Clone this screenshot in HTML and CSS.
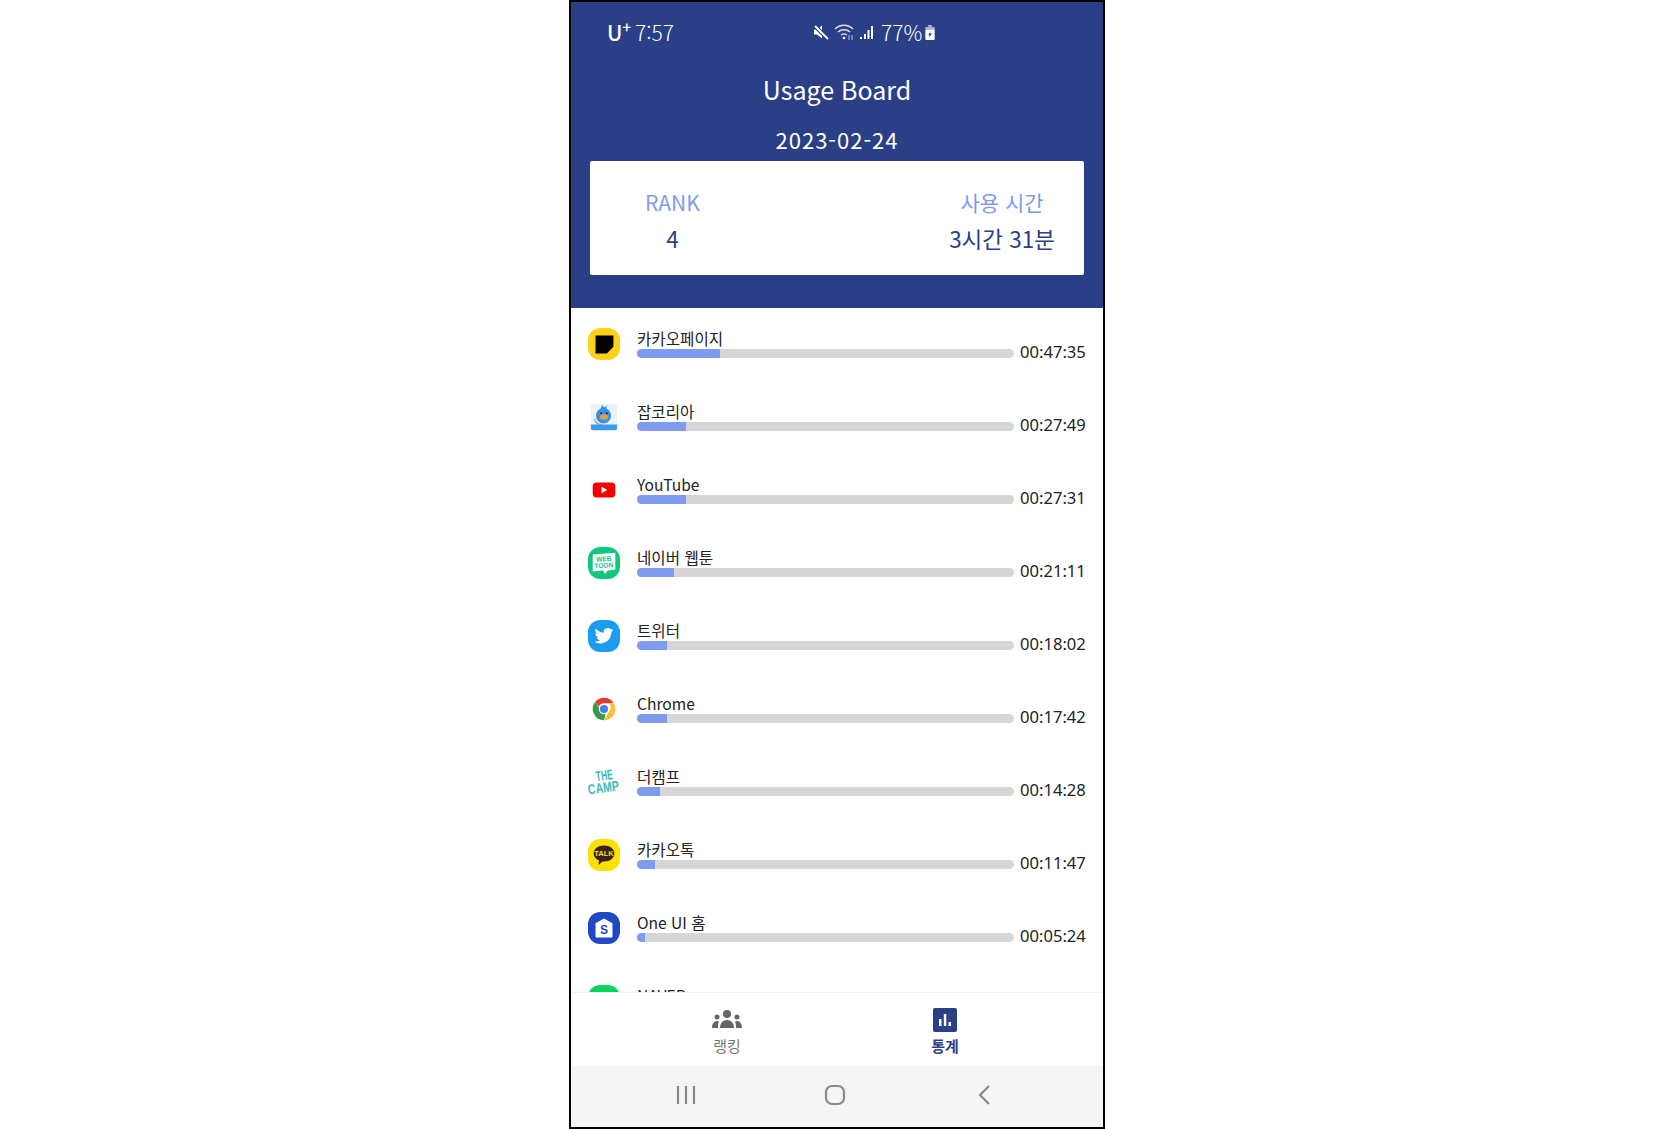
FILE: index.html
```html
<!DOCTYPE html>
<html lang="ko">
<head>
    <meta charset="UTF-8">
    <meta name="viewport" content="width=device-width, initial-scale=1.0">
    <title>Usage Board</title>
    <link rel="stylesheet" href="styles.css">
</head>
<body>

<div class="phone">
    <header class="top">
        <div class="status">
            <span class="carrier">U<sup>+</sup></span>
            <span class="clock">7:57</span>
            <div class="status-right">
                <svg class="ic-mute" viewBox="0 0 18 18"><path d="M2 6.500h3l5-4v13l-5-4H2z" fill="#fff"/><path d="M2 2l14 14" stroke="#2a3f85" stroke-width="4"/><path d="M3 3l13 13" stroke="#fff" stroke-width="1.800"/></svg>
                <svg class="ic-wifi" viewBox="0 0 20 18"><path d="M1 6c5-5 13-5 18 0M4 9c3.500-3 8.500-3 12 0M7 12c2-1.500 4-1.500 6 0" fill="none" stroke="#dfe3f0" stroke-width="1.400"/><circle cx="10" cy="15" r="1.300" fill="#fff"/><path d="M15 12v5M18 12v5" stroke="#b9c0da" stroke-width="1"/></svg>
                <svg class="ic-signal" viewBox="0 0 16 16"><path d="M2 13h2v2H2zM6 10h2v5H6zM9.500 6h2v9h-2zM13 2h2v13h-2z" fill="#fff"/></svg>
                <span class="battery-num">77%</span>
                <svg class="ic-batt" viewBox="0 0 10 16"><rect x="3" y="0" width="4" height="2" fill="#aab2cf"/><rect x="0" y="2" width="10" height="4" fill="#aab2cf"/><rect x="0" y="5" width="10" height="11" rx="1" fill="#fff"/><path d="M6 6L3 11h2l-1 3 3-5H5z" fill="#2a3f85"/></svg>
            </div>
        </div>
        <h1>Usage Board</h1>
        <div class="date">2023-02-24</div>
        <div class="summary">
            <div class="summary-col">
                <div class="summary-label">RANK</div>
                <div class="summary-value">4</div>
            </div>
            <div class="summary-col">
                <div class="summary-label">사용 시간</div>
                <div class="summary-value">3시간 31분</div>
            </div>
        </div>
    </header>

    <main class="list">
        <div class="row">
            <svg class="app-icon" viewBox="0 0 34 34"><rect width="34" height="34" rx="13" fill="#fdd117"/><path d="M8 8h19v12l-7 7H8z" fill="#000"/></svg>
            <div class="app-name">카카오페이지</div>
            <div class="track"><div class="fill" style="width:83px"></div></div>
            <div class="time">00:47:35</div>
        </div>
        <div class="row">
            <svg class="app-icon" viewBox="0 0 34 34"><rect x="3" y="3" width="28" height="28" rx="3" fill="#eaf2fb"/><path d="M3 25h28v4a2 2 0 0 1-2 2H5a2 2 0 0 1-2-2z" fill="#3f9bea"/><path d="M15 4l2 3 3-2-.5 3c3 1.500 5 4 5 7.500 0 5-4 8.500-8 8.500s-8-3.500-8-8.500c0-3.500 2-6 5-7.500z" fill="#3d8fe0"/><path d="M7 19c0 3 3 6 7 6" stroke="#8a9bb0" stroke-width="1.200" fill="none"/><ellipse cx="17" cy="17" rx="4.500" ry="2.800" fill="#d9a441"/><circle cx="14" cy="13" r="1" fill="#123"/><circle cx="20" cy="13" r="1" fill="#123"/></svg>
            <div class="app-name">잡코리아</div>
            <div class="track"><div class="fill" style="width:49px"></div></div>
            <div class="time">00:27:49</div>
        </div>
        <div class="row">
            <svg class="app-icon" viewBox="0 0 34 34"><rect x="5" y="9" width="24" height="16" rx="4" fill="#f40000"/><path d="M14.500 13.500l6 3.500-6 3.500z" fill="#fff"/></svg>
            <div class="app-name">YouTube</div>
            <div class="track"><div class="fill" style="width:49px"></div></div>
            <div class="time">00:27:31</div>
        </div>
        <div class="row">
            <svg class="app-icon" viewBox="0 0 34 34"><rect width="34" height="34" rx="13" fill="#10c77e"/><path d="M5 8l24-2v18l-8 1-3 4-2-4-11 1z" fill="#fff"/><text class="webtoon-text" x="17" y="15" text-anchor="middle" transform="rotate(-4 17 15)">WEB</text><text class="webtoon-text" x="17" y="22" text-anchor="middle" transform="rotate(-4 17 22)">TOON</text></svg>
            <div class="app-name">네이버 웹툰</div>
            <div class="track"><div class="fill" style="width:37px"></div></div>
            <div class="time">00:21:11</div>
        </div>
        <div class="row">
            <svg class="app-icon" viewBox="0 0 34 34"><rect width="34" height="34" rx="13" fill="#1d9bf0"/><path d="M27 10.500c-.8.400-1.600.600-2.400.700.900-.500 1.500-1.300 1.800-2.300-.8.500-1.700.800-2.600 1a4.100 4.100 0 0 0-7 3.700c-3.400-.2-6.400-1.800-8.400-4.300-1.100 1.900-.5 4.300 1.300 5.500-.7 0-1.300-.2-1.900-.5 0 2 1.400 3.700 3.300 4.100-.6.200-1.200.2-1.900.1.500 1.600 2 2.800 3.800 2.800-1.800 1.400-4 2-6.100 1.800 1.800 1.200 4 1.800 6.300 1.800 7.600 0 11.800-6.400 11.600-12.100.8-.6 1.500-1.300 2.200-2.300z" fill="#fff"/></svg>
            <div class="app-name">트위터</div>
            <div class="track"><div class="fill" style="width:30px"></div></div>
            <div class="time">00:18:02</div>
        </div>
        <div class="row">
            <svg class="app-icon" viewBox="0 0 34 34"><path d="M17 5a12 12 0 0 1 10.400 6H17a6 6 0 0 0-5.600 3.800L7.800 9.400A12 12 0 0 1 17 5z" fill="#e33b2e"/><path d="M27.400 11A12 12 0 0 1 17 29l5.200-9a6 6 0 0 0 0-9z" fill="#fbc02d"/><path d="M17 29A12 12 0 0 1 7.800 9.400l5 8.600a6 6 0 0 0 6.400 2.800z" fill="#3a9a4a"/><circle cx="17" cy="17" r="5.500" fill="#fff"/><circle cx="17" cy="17" r="4.300" fill="#3f7fe8"/></svg>
            <div class="app-name">Chrome</div>
            <div class="track"><div class="fill" style="width:30px"></div></div>
            <div class="time">00:17:42</div>
        </div>
        <div class="row">
            <svg class="app-icon camp-icon" viewBox="0 0 34 34"><text class="camp-text" x="18" y="15" text-anchor="middle" textLength="18" lengthAdjust="spacingAndGlyphs" transform="rotate(-8 18 15)">THE</text><text class="camp-text" x="17" y="28" text-anchor="middle" textLength="33" lengthAdjust="spacingAndGlyphs" transform="rotate(-8 17 28)">CAMP</text></svg>
            <div class="app-name">더캠프</div>
            <div class="track"><div class="fill" style="width:23px"></div></div>
            <div class="time">00:14:28</div>
        </div>
        <div class="row">
            <svg class="app-icon" viewBox="0 0 34 34"><rect width="34" height="34" rx="13" fill="#fae100"/><path d="M17 7c6.300 0 11 3.600 11 8.500S23.300 24 17 24h-1.500L11 27.500l.8-4.700C8 21.300 6 18.700 6 15.500 6 10.600 10.700 7 17 7z" fill="#3b1e1e"/><text class="talk-text" x="17" y="18.500" text-anchor="middle">TALK</text></svg>
            <div class="app-name">카카오톡</div>
            <div class="track"><div class="fill" style="width:18px"></div></div>
            <div class="time">00:11:47</div>
        </div>
        <div class="row">
            <svg class="app-icon" viewBox="0 0 34 34"><rect width="34" height="34" rx="13" fill="#1f4ac4"/><path d="M17 7l9 5v14a1 1 0 0 1-1 1H9a1 1 0 0 1-1-1V12z" fill="#fff"/><text class="home-text" x="17" y="23" text-anchor="middle">S</text></svg>
            <div class="app-name">One UI 홈</div>
            <div class="track"><div class="fill" style="width:8px"></div></div>
            <div class="time">00:05:24</div>
        </div>
        <div class="row">
            <svg class="app-icon" viewBox="0 0 34 34"><rect width="34" height="34" rx="13" fill="#06d35f"/></svg>
            <div class="app-name">NAVER</div>
            <div class="track"><div class="fill" style="width:6px"></div></div>
        </div>
    </main>

    <nav class="tabs">
        <div class="tab">
            <svg class="tab-icon" viewBox="0 0 32 24"><circle cx="16" cy="6" r="4" fill="#666"/><path d="M9 20c0-5 3-8 7-8s7 3 7 8z" fill="#666"/><circle cx="6" cy="9" r="2.500" fill="#666"/><path d="M1 20c0-4 2-7 5-7 1 0 1.500.3 2 .7C7 15.500 6.800 18 7 20z" fill="#666"/><circle cx="26" cy="9" r="2.500" fill="#666"/><path d="M31 20c0-4-2-7-5-7-1 0-1.500.3-2 .7 1 1.800 1.200 4.300 1 6.300z" fill="#666"/></svg>
            <span class="tab-label">랭킹</span>
        </div>
        <div class="tab tab-on">
            <svg class="tab-icon" viewBox="0 0 24 24"><rect width="24" height="24" rx="2" fill="#2a3f85"/><path d="M6 11h2.500v7H6zM10.800 6h2.500v12h-2.500zM15.500 14H18v4h-2.500z" fill="#fff"/></svg>
            <span class="tab-label">통계</span>
        </div>
    </nav>

    <footer class="softkeys">
        <svg class="key" viewBox="0 0 24 24"><path d="M4 3v18M12 3v18M20 3v18" stroke="#8a8a8a" stroke-width="2.200" fill="none"/></svg>
        <svg class="key" viewBox="0 0 24 24"><rect x="3" y="3" width="18" height="18" rx="6" stroke="#8a8a8a" stroke-width="2.200" fill="none"/></svg>
        <svg class="key" viewBox="0 0 24 24"><path d="M17 3l-9 9 9 9" stroke="#8a8a8a" stroke-width="2.200" fill="none"/></svg>
    </footer>
</div>

</body>
</html>
```

FILE: styles.css
```css
html, body {
    height: 100%;
}
body {
    margin: 0;
    background: #fff;
    font-family: "Noto Sans CJK KR", "Noto Sans", sans-serif;
    font-weight: 300;
    display: flex;
    justify-content: center;
}
.phone {
    width: 536px;
    height: 1129px;
    box-sizing: border-box;
    border: 2px solid #000;
    display: flex;
    flex-direction: column;
    overflow: hidden;
}
.top {
    background: #2a3f85;
    color: #fff;
    height: 306px;
    flex: none;
    padding: 0 19px;
    box-sizing: border-box;
}
.status {
    display: flex;
    align-items: center;
    height: 60px;
    padding-left: 17px;
    font-size: 21px;
}
.carrier {
    font-weight: 500;
    margin-right: 4px;
}
.carrier sup {
    font-size: 15px;
    line-height: 0;
}
.status-right {
    display: flex;
    align-items: center;
    margin-left: 138px;
    gap: 4px;
}
.ic-mute { width: 18px; height: 18px; }
.ic-wifi { width: 20px; height: 18px; }
.ic-signal { width: 16px; height: 16px; }
.ic-batt { width: 10px; height: 15px; margin-left: -1px; }
.battery-num {
    margin-left: 3px;
}
h1 {
    margin: 0;
    text-align: center;
    font-size: 25px;
    font-weight: 400;
    line-height: 36px;
    margin-top: 9px;
}
.date {
    text-align: center;
    font-size: 22px;
    font-weight: 400;
    letter-spacing: 1px;
    line-height: 30px;
    margin-top: 17px;
    height: 16px;
}
.summary {
    margin-top: 21px;
    height: 114px;
    background: #fff;
    border-radius: 2px;
    display: flex;
    justify-content: space-between;
    padding: 23px 29px 0 0;
    box-sizing: border-box;
}
.summary-col {
    text-align: center;
    padding-left: 55px;
}
.summary-label {
    color: #7f9bef;
    font-size: 21px;
    line-height: 36px;
    font-weight: 400;
}
.summary-value {
    color: #2a3f85;
    font-size: 22.500px;
    font-weight: 400;
    line-height: 36px;
}
.list {
    flex: 1;
    min-height: 0;
    overflow: hidden;
    background: #fff;
}
.row {
    height: 73px;
    box-sizing: border-box;
    display: grid;
    grid-template-columns: 32px 377px 1fr;
    grid-template-rows: 20px 9px;
    align-content: center;
    padding: 0 0 2px 17px;
    color: #222;
}
.app-icon {
    grid-row: 1 / 3;
    width: 32px;
    height: 32px;
    align-self: center;
}
.camp-icon {
    overflow: visible;
}
.app-name {
    grid-column: 2;
    grid-row: 1;
    font-size: 15.600px;
    font-weight: 400;
    line-height: 18px;
    margin-left: 17px;
}
.track {
    grid-column: 2;
    grid-row: 2;
    margin-left: 17px;
    width: 377px;
    height: 9px;
    background: #d6d6d6;
    border-radius: 5px;
    overflow: hidden;
}
.fill {
    height: 100%;
    background: #7f9bef;
}
.time {
    grid-column: 3;
    grid-row: 2;
    font-family: "Noto Sans", sans-serif;
    font-size: 16.600px;
    font-weight: 400;
    line-height: 9px;
    margin: -2px 0 0 23px;
}
.webtoon-text {
    font-family: "Liberation Sans", sans-serif;
    font-size: 7px;
    font-weight: 700;
    fill: #10c77e;
}
.camp-text {
    font-family: "Liberation Sans", sans-serif;
    font-size: 15px;
    font-weight: 700;
    fill: #3fb6b8;
}
.talk-text {
    font-family: "Liberation Sans", sans-serif;
    font-size: 8px;
    font-weight: 700;
    fill: #fae100;
}
.home-text {
    font-family: "Liberation Sans", sans-serif;
    font-size: 13px;
    font-weight: 700;
    fill: #1f4ac4;
}
.tabs {
    flex: none;
    height: 74px;
    background: #fff;
    border-top: 1px solid #f1f1f1;
    box-sizing: border-box;
    display: flex;
    padding-left: 120px;
    gap: 146px;
}
.tab {
    width: 72px;
    display: flex;
    flex-direction: column;
    align-items: center;
    padding-top: 15px;
    color: #777;
}
.tab-icon {
    width: 32px;
    height: 24px;
}
.tab-label {
    font-size: 15px;
    font-weight: 400;
    line-height: 20px;
    margin-top: 4px;
}
.tab-on {
    color: #2a3f85;
}
.tab-on .tab-label {
    font-weight: 700;
}
.softkeys {
    flex: none;
    height: 61px;
    padding: 0 0 3px 103px;
    box-sizing: border-box;
    background: #f5f5f5;
    display: flex;
    align-items: center;
    gap: 125px;
}
.key {
    width: 24px;
    height: 24px;
}
```
